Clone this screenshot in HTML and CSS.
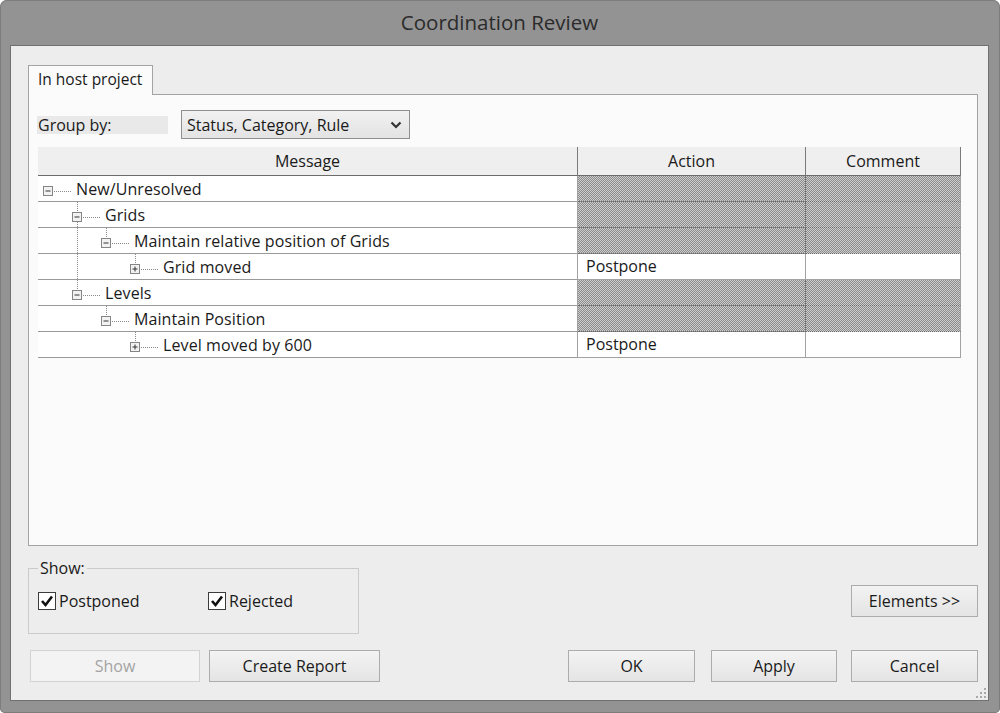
FILE: index.html
```html
<!DOCTYPE html>
<html>
<head>
<meta charset="utf-8">
<title>Coordination Review</title>
<link rel="stylesheet" href="styles.css">
</head>
<body>
<div class="window">
  <div class="titlebar">Coordination Review</div>
  <div class="client">
    <div class="tabs"><div class="tab">In host project</div></div>
    <div class="panel">
      <div class="groupby">
        <span class="gb-label">Group by:</span>
        <div class="combo">
          <span>Status, Category, Rule</span>
          <svg class="chev" width="12" height="8" viewBox="0 0 12 8"><polyline points="1.5,1.5 6,6 10.5,1.5" fill="none" stroke="#333" stroke-width="2.2"/></svg>
        </div>
      </div>
      <div class="grid">
        <div class="hdr">
          <div class="hc">Message</div>
          <div class="hc">Action</div>
          <div class="hc">Comment</div>
        </div>

        <div class="row">
          <div class="msg">
            <span class="exp"><svg class="box" width="10" height="10" viewBox="0 0 10 10"><rect x="0.5" y="0.5" width="9" height="9" fill="#f2f2f2" stroke="#858585"/><line x1="2.5" y1="5" x2="7.5" y2="5" stroke="#333"/></svg></span>
            <span class="txt">New/Unresolved</span>
          </div>
          <div class="act hatch"></div>
          <div class="cmt hatch"></div>
        </div>

        <div class="row">
          <div class="msg">
            <span class="ind"></span>
            <span class="exp updown"><svg class="box" width="10" height="10" viewBox="0 0 10 10"><rect x="0.5" y="0.5" width="9" height="9" fill="#f2f2f2" stroke="#858585"/><line x1="2.5" y1="5" x2="7.5" y2="5" stroke="#333"/></svg></span>
            <span class="txt">Grids</span>
          </div>
          <div class="act hatch"></div>
          <div class="cmt hatch"></div>
        </div>

        <div class="row">
          <div class="msg">
            <span class="ind"></span><span class="ind pipe"></span>
            <span class="exp up"><svg class="box" width="10" height="10" viewBox="0 0 10 10"><rect x="0.5" y="0.5" width="9" height="9" fill="#f2f2f2" stroke="#858585"/><line x1="2.5" y1="5" x2="7.5" y2="5" stroke="#333"/></svg></span>
            <span class="txt">Maintain relative position of Grids</span>
          </div>
          <div class="act hatch"></div>
          <div class="cmt hatch"></div>
        </div>

        <div class="row">
          <div class="msg">
            <span class="ind"></span><span class="ind pipe"></span><span class="ind"></span>
            <span class="exp up"><svg class="box" width="10" height="10" viewBox="0 0 10 10"><rect x="0.5" y="0.5" width="9" height="9" fill="#f2f2f2" stroke="#858585"/><line x1="2.5" y1="5" x2="7.5" y2="5" stroke="#333"/><line x1="5" y1="2.5" x2="5" y2="7.5" stroke="#333"/></svg></span>
            <span class="txt">Grid moved</span>
          </div>
          <div class="act">Postpone</div>
          <div class="cmt"></div>
        </div>

        <div class="row">
          <div class="msg">
            <span class="ind"></span>
            <span class="exp up"><svg class="box" width="10" height="10" viewBox="0 0 10 10"><rect x="0.5" y="0.5" width="9" height="9" fill="#f2f2f2" stroke="#858585"/><line x1="2.5" y1="5" x2="7.5" y2="5" stroke="#333"/></svg></span>
            <span class="txt">Levels</span>
          </div>
          <div class="act hatch"></div>
          <div class="cmt hatch"></div>
        </div>

        <div class="row">
          <div class="msg">
            <span class="ind"></span><span class="ind"></span>
            <span class="exp up"><svg class="box" width="10" height="10" viewBox="0 0 10 10"><rect x="0.5" y="0.5" width="9" height="9" fill="#f2f2f2" stroke="#858585"/><line x1="2.5" y1="5" x2="7.5" y2="5" stroke="#333"/></svg></span>
            <span class="txt">Maintain Position</span>
          </div>
          <div class="act hatch"></div>
          <div class="cmt hatch"></div>
        </div>

        <div class="row">
          <div class="msg">
            <span class="ind"></span><span class="ind"></span><span class="ind"></span>
            <span class="exp up"><svg class="box" width="10" height="10" viewBox="0 0 10 10"><rect x="0.5" y="0.5" width="9" height="9" fill="#f2f2f2" stroke="#858585"/><line x1="2.5" y1="5" x2="7.5" y2="5" stroke="#333"/><line x1="5" y1="2.5" x2="5" y2="7.5" stroke="#333"/></svg></span>
            <span class="txt">Level moved by 600</span>
          </div>
          <div class="act">Postpone</div>
          <div class="cmt"></div>
        </div>
      </div>
    </div>

    <div class="mid">
      <fieldset class="show">
        <legend>Show:</legend>
        <div class="chks">
          <label class="chk first"><svg width="18" height="18" viewBox="0 0 18 18"><rect x="0.5" y="0.5" width="17" height="17" fill="#fff" stroke="#3c3c3c"/><polyline points="4,9 7.5,13 14,4.5" fill="none" stroke="#111" stroke-width="2.6"/></svg>Postponed</label>
          <label class="chk"><svg width="18" height="18" viewBox="0 0 18 18"><rect x="0.5" y="0.5" width="17" height="17" fill="#fff" stroke="#3c3c3c"/><polyline points="4,9 7.5,13 14,4.5" fill="none" stroke="#111" stroke-width="2.6"/></svg>Rejected</label>
        </div>
      </fieldset>
      <button class="btn elements">Elements &gt;&gt;</button>
    </div>

    <div class="buttons">
      <button class="btn b-show" disabled>Show</button>
      <button class="btn b-report">Create Report</button>
      <span class="spacer"></span>
      <button class="btn b-ok">OK</button>
      <button class="btn b-apply">Apply</button>
      <button class="btn b-cancel">Cancel</button>
    </div>

    <svg class="grip" width="10" height="10" viewBox="0 0 10 10">
      <rect x="8" y="0" width="2" height="2" fill="#a8a8a8"/>
      <rect x="4" y="4" width="2" height="2" fill="#a8a8a8"/>
      <rect x="8" y="4" width="2" height="2" fill="#a8a8a8"/>
      <rect x="0" y="8" width="2" height="2" fill="#a8a8a8"/>
      <rect x="4" y="8" width="2" height="2" fill="#a8a8a8"/>
      <rect x="8" y="8" width="2" height="2" fill="#a8a8a8"/>
    </svg>
  </div>
</div>
</body>
</html>
```
FILE: styles.css
```css
* { box-sizing: border-box; }
html, body { margin: 0; padding: 0; background: #ffffff; }
body {
  font-family: "Open Sans", "Noto Sans", "Liberation Sans", sans-serif;
  font-size: 16px;
  color: #1a1a1a;
}

.window {
  width: 1000px;
  height: 713px;
  background: #939393;
  border-radius: 7px 7px 5px 5px;
  box-shadow: inset 0 0 0 1px #7d7d7d;
  padding: 0 11px 12px 10px;
  display: flex;
  flex-direction: column;
}

.titlebar {
  flex: none;
  height: 45px;
  line-height: 45px;
  text-align: center;
  font-size: 20.5px;
  color: #2b2b2b;
}

.client {
  flex: 1;
  position: relative;
  background: #ededed;
  border: 1px solid #707070;
  padding: 19px 10px 0 17px;
  display: flex;
  flex-direction: column;
}

.tabs { display: flex; height: 29px; flex: none; }
.tab {
  position: relative;
  z-index: 1;
  width: 125px;
  height: 30px;
  border: 1px solid #a3a3a3;
  border-bottom: none;
  background: #fbfbfb;
  padding-left: 9px;
  line-height: 27px;
  font-size: 15.5px;
}

.panel {
  flex: none;
  height: 452px;
  border: 1px solid #a3a3a3;
  background: #fbfbfb;
  padding: 15px 0 0 8px;
}

.groupby { display: flex; align-items: center; height: 29px; }
.gb-label {
  width: 131px;
  height: 18px;
  line-height: 18px;
  background: #e9e9e9;
  padding-left: 1px;
  margin-right: 13px;
}
.combo {
  width: 229px;
  height: 29px;
  border: 1px solid #8f8f8f;
  background: linear-gradient(#f1f1f1, #e3e3e3);
  display: flex;
  align-items: center;
  justify-content: space-between;
  padding: 0 7px 0 5px;
}

.grid { margin: 8px 0 0 1px; width: 923px; }
.hdr, .row {
  display: grid;
  grid-template-columns: 540px 228px 155px;
}
.hdr { height: 29px; }
.hc {
  background: #efefef;
  border-right: 1px solid #7b7b7b;
  border-bottom: 1px solid #6c6c6c;
  text-align: center;
  line-height: 28px;
}

.row { height: 26px; }
.msg {
  display: flex;
  background: #fff;
  border-bottom: 1px solid #9a9a9a;
  border-right: 1px solid #a2a2a2;
  padding-left: 5px;
  height: 26px;
}
.txt { line-height: 26px; white-space: nowrap; letter-spacing: 0.1px; }
.ind { flex: none; width: 29px; height: 25px; }
.ind.pipe {
  background: repeating-linear-gradient(to bottom, #8a8a8a 0 1px, transparent 1px 2px) 5px 0 / 1px 100% no-repeat;
}
.exp {
  flex: none;
  width: 33px;
  height: 25px;
  padding-top: 10px;
  display: flex;
  align-items: flex-start;
  background: repeating-linear-gradient(to right, #8a8a8a 0 1px, transparent 1px 2px) 11px 15px / 17px 1px no-repeat;
}
.exp.up {
  background:
    repeating-linear-gradient(to right, #8a8a8a 0 1px, transparent 1px 2px) 11px 15px / 17px 1px no-repeat,
    repeating-linear-gradient(to bottom, #8a8a8a 0 1px, transparent 1px 2px) 5px 0 / 1px 10px no-repeat;
}
.exp.updown {
  background:
    repeating-linear-gradient(to right, #8a8a8a 0 1px, transparent 1px 2px) 11px 15px / 17px 1px no-repeat,
    repeating-linear-gradient(to bottom, #8a8a8a 0 1px, transparent 1px 2px) 5px 0 / 1px 10px no-repeat,
    repeating-linear-gradient(to bottom, #8a8a8a 0 1px, transparent 1px 2px) 5px 20px / 1px 6px no-repeat;
}
.box { display: block; }

.act, .cmt {
  background: #fff;
  border-bottom: 1px solid #a2a2a2;
  border-right: 1px solid #a2a2a2;
  padding-left: 8px;
  line-height: 25px;
}
.hatch {
  background: conic-gradient(#8c8c8c 25%, #cdcdcd 0 50%, #8c8c8c 0 75%, #cdcdcd 0) 0 0 / 2px 2px;
  border-bottom: 1px dotted #6a6a6a;
}
.act.hatch { border-right: 1px dotted #6a6a6a; }

.mid {
  display: flex;
  justify-content: space-between;
  align-items: flex-start;
  margin-top: 12px;
  flex: none;
}
.show {
  width: 331px;
  height: 76px;
  margin: 0;
  border: 1px solid #cbcbcb;
  padding: 0 0 0 9px;
}
.show legend {
  padding: 0 2px;
  line-height: 20px;
}
.chks { display: flex; margin-top: 12px; }
.chk { display: flex; align-items: center; gap: 3px; }
.chk svg { display: block; }
.chk.first { width: 170px; }

.btn {
  height: 32px;
  border: 1px solid #acacac;
  background: linear-gradient(#f3f3f3, #e4e4e4);
  font: inherit;
  color: #1a1a1a;
  padding: 0;
  border-radius: 0;
}
.btn:disabled {
  border-color: #d3d3d3;
  background: #f3f3f3;
  color: #a4a4a4;
}
.elements { width: 127px; margin-top: 27px; }

.buttons { display: flex; margin-top: 16px; flex: none; }
.spacer { flex: 1; }
.b-show { width: 170px; margin-left: 2px; }
.b-report { width: 171px; margin-left: 9px; }
.b-ok { width: 127px; }
.b-apply { width: 126px; margin-left: 16px; }
.b-cancel { width: 127px; margin-left: 14px; }

.grip { position: absolute; right: 2px; bottom: 2px; }
```
